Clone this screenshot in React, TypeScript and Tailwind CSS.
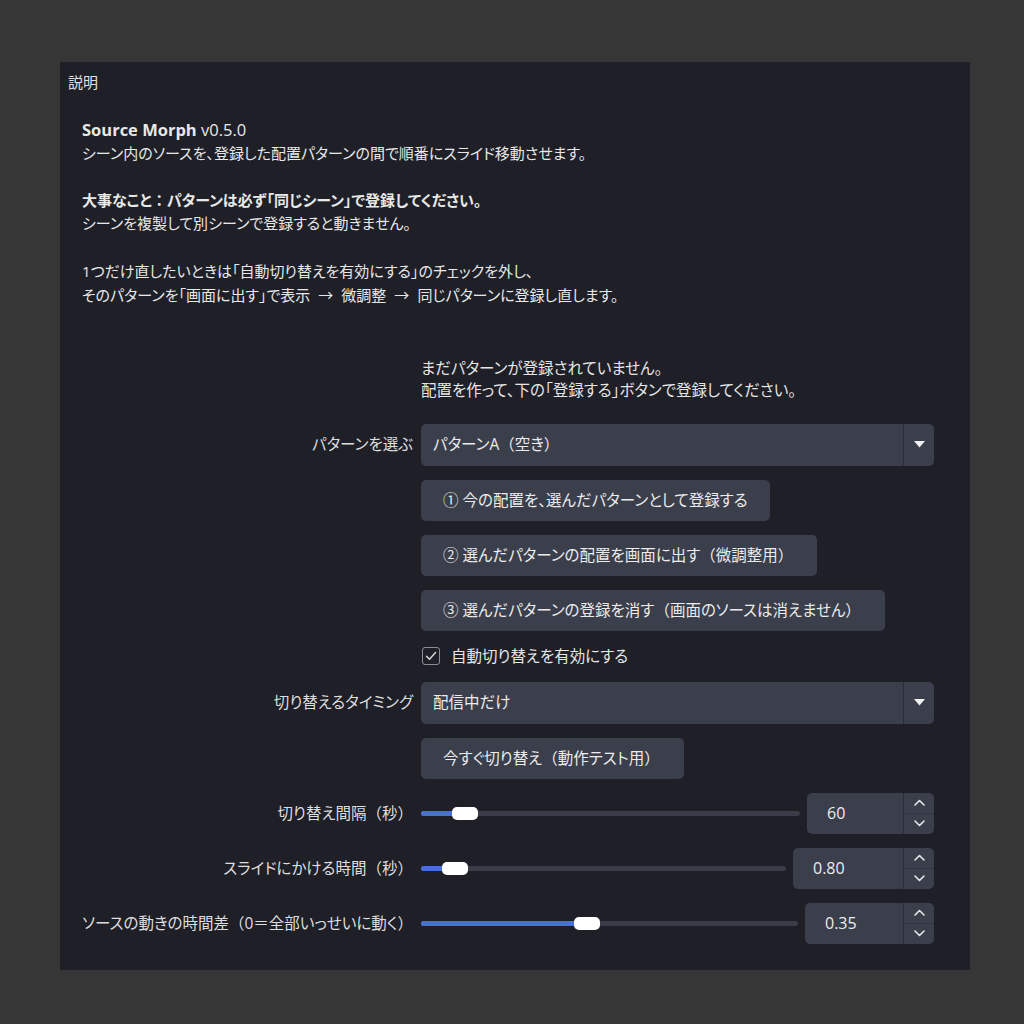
import React from "react";

const FONT = {
  fontFamily: '"Open Sans", "Noto Sans CJK JP", sans-serif',
};

function fmt(s: string): React.ReactNode[] {
  const parts = s.split(/([（）：→])/);
  return parts.map((p, i) =>
    p === "→" ? (
      <span key={i} className="mx-[8px] font-['Noto_Sans_CJK_JP'] [font-feature-settings:normal]">
        {p}
      </span>
    ) : /^[（）：]$/.test(p) ? (
      <span key={i} className="[font-feature-settings:normal]">
        {p}
      </span>
    ) : (
      <React.Fragment key={i}>{p}</React.Fragment>
    )
  );
}

function Chevron({ up }: { up?: boolean }) {
  return (
    <svg width="11" height="7" viewBox="0 0 11 7" fill="none">
      {up ? (
        <path d="M1 6 L5.5 1.5 L10 6" stroke="#e6e6e6" strokeWidth="1.6" strokeLinecap="round" strokeLinejoin="round" />
      ) : (
        <path d="M1 1 L5.5 5.5 L10 1" stroke="#e6e6e6" strokeWidth="1.6" strokeLinecap="round" strokeLinejoin="round" />
      )}
    </svg>
  );
}

function Select({ value }: { value: string }) {
  return (
    <div className="flex h-[42px] items-stretch rounded-[5px] bg-[#3b3e4b]">
      <div className="flex flex-1 items-center pl-[12px] text-[#ececec]">{fmt(value)}</div>
      <div className="flex w-[31px] items-center justify-center border-l border-[#2a2c36]">
        <svg width="11" height="7" viewBox="0 0 11 7">
          <path d="M0 0 L11 0 L5.5 6.5 Z" fill="#f2f2f2" />
        </svg>
      </div>
    </div>
  );
}

function Button({ text }: { text: string }) {
  const endsParen = text.endsWith("）");
  return (
    <div
      className={`flex h-[41px] w-fit items-center rounded-[5px] bg-[#3b3e4b] pl-[22px] text-[#ececec] ${
        endsParen ? "pr-[24px]" : "pr-[22px]"
      }`}
    >
      {fmt(text)}
    </div>
  );
}

function SliderRow({
  handle,
  spinW,
  value,
}: {
  handle: number;
  spinW: string;
  value: string;
}) {
  return (
    <div className="flex h-[41px] items-center gap-[7px]">
      <div className="relative h-[5px] flex-1 rounded-full bg-[#3a3c48]">
        <div
          className="absolute left-0 top-0 h-[5px] rounded-full bg-[#4770d9]"
          style={{ width: handle + 6 }}
        />
        <div
          className="absolute top-[-4px] h-[13px] w-[26px] rounded-[5px] bg-white"
          style={{ left: handle }}
        />
      </div>
      <div className={`flex h-[41px] items-stretch rounded-[5px] bg-[#3b3e4b] ${spinW}`}>
        <div className="flex flex-1 items-center pl-[20px] text-[16px] text-[#ececec]">{value}</div>
        <div className="flex w-[31px] flex-col border-l border-[#2a2c36]">
          <div className="flex flex-1 items-center justify-center border-b border-[#33353f]">
            <Chevron up />
          </div>
          <div className="flex flex-1 items-center justify-center">
            <Chevron />
          </div>
        </div>
      </div>
    </div>
  );
}

function Label({ text }: { text: string }) {
  return (
    <div className="flex items-center justify-end text-[#dedede]">{fmt(text)}</div>
  );
}

export default function App() {
  return (
    <div
      className="min-h-screen w-full bg-[#363636] pl-[60px] pt-[62px]"
      style={FONT}
    >
      <div className="flex h-[908px] w-[910px] flex-col bg-[#1e1f27] text-[15px] text-[#e6e6e6] [font-feature-settings:'palt']">
        <div className="pl-[8px] pt-[10px] leading-[20px] text-[#e0e0e0]">説明</div>

        <div className="mt-[26px] pl-[22px] leading-[23.6px] text-[#e8e8e8]">
          <div className="text-[16.5px]">
            <span className="font-bold">Source Morph</span> v0.5.0
          </div>
          <div>シーン内のソースを、登録した配置パターンの間で順番にスライド移動させます。</div>
          <div className="h-[23.6px]" />
          <div className="font-bold">{fmt("大事なこと：パターンは必ず「同じシーン」で登録してください。")}</div>
          <div>シーンを複製して別シーンで登録すると動きません。</div>
          <div className="h-[23.6px]" />
          <div>1つだけ直したいときは「自動切り替えを有効にする」のチェックを外し、</div>
          <div>{fmt("そのパターンを「画面に出す」で表示→微調整→同じパターンに登録し直します。")}</div>
        </div>

        <div className="mt-[49px] grid grid-cols-[353px_1fr] gap-x-[8px] gap-y-[14px] pr-[36px] text-[15.5px]">
          <div />
          <div className="mb-[9px] leading-[22px] text-[#e6e6e6]">
            <div>まだパターンが登録されていません。</div>
            <div>配置を作って、下の「登録する」ボタンで登録してください。</div>
          </div>

          <Label text="パターンを選ぶ" />
          <Select value="パターンA（空き）" />

          <div />
          <Button text="① 今の配置を、選んだパターンとして登録する" />

          <div />
          <Button text="② 選んだパターンの配置を画面に出す（微調整用）" />

          <div />
          <Button text="③ 選んだパターンの登録を消す（画面のソースは消えません）" />

          <div />
          <div className="flex h-[23px] items-center gap-[11px]">
            <div className="ml-[1px] flex h-[18px] w-[18px] items-center justify-center rounded-[3px] border-[1.5px] border-[#8e8e94]">
              <svg width="12" height="10" viewBox="0 0 12 10" fill="none">
                <path d="M1.5 5.2 L4.5 8.2 L10.5 1.5" stroke="#d8d8d8" strokeWidth="1.5" strokeLinecap="round" strokeLinejoin="round" />
              </svg>
            </div>
            <span>自動切り替えを有効にする</span>
          </div>

          <Label text="切り替えるタイミング" />
          <Select value="配信中だけ" />

          <div />
          <Button text="今すぐ切り替え（動作テスト用）" />

          <Label text="切り替え間隔（秒）" />
          <SliderRow handle={31} spinW="w-[127px]" value="60" />

          <Label text="スライドにかける時間（秒）" />
          <SliderRow handle={21} spinW="w-[141px]" value="0.80" />

          <Label text="ソースの動きの時間差（0＝全部いっせいに動く）" />
          <SliderRow handle={153} spinW="w-[129px]" value="0.35" />
        </div>
      </div>
    </div>
  );
}
